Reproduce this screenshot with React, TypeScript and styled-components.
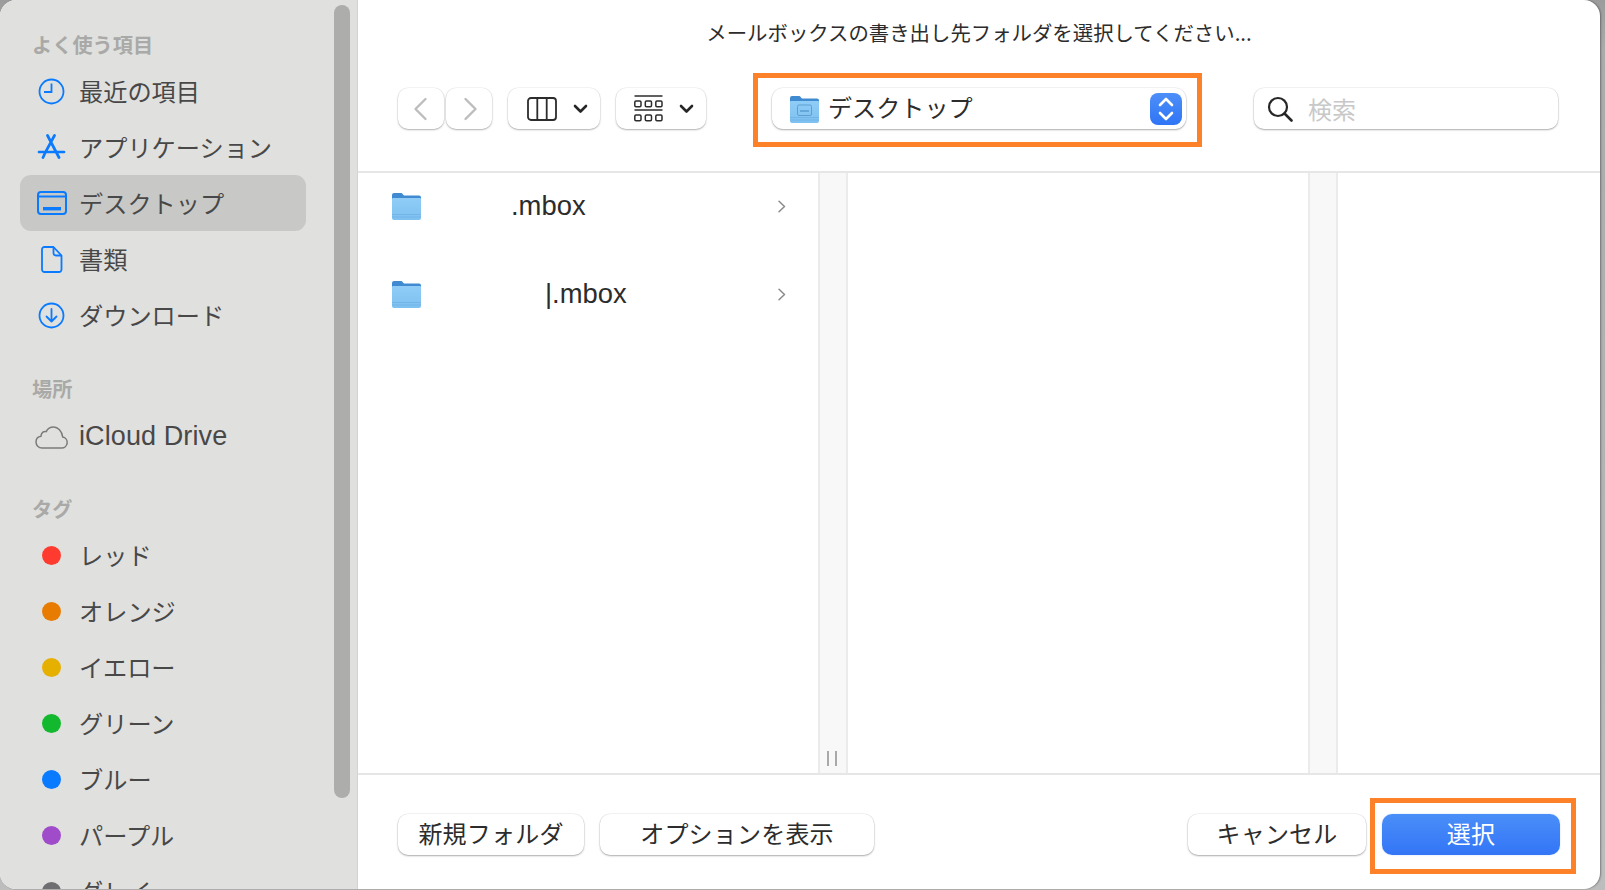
import React from "react";
import styled, { createGlobalStyle } from "styled-components";

const JP = `"Noto Sans CJK JP", "Liberation Sans", sans-serif`;

const Global = createGlobalStyle`
  html, body { margin: 0; padding: 0; width: 1605px; height: 890px; overflow: hidden; background: #a9a9a9; }
  #root { width: 1605px; height: 890px; overflow: hidden; }
  * { box-sizing: border-box; }
`;

const Backdrop = styled.div`
  width: 1605px; height: 890px; padding-right: 5px; padding-bottom: 1px;
  background: linear-gradient(180deg, #9c9c9c 0, #ababab 50px, #bdbdbd 100%);
`;
const Win = styled.div`
  width: 1600px; height: 889px; display: flex; overflow: hidden;
  border-radius: 16px; background: #fff; font-family: ${JP};
  box-shadow: 1px 0 2px rgba(0,0,0,.35);
`;
const Sidebar = styled.aside`
  width: 358px; flex: none; height: 100%; position: relative; overflow: hidden;
  background: #e0e0de; border-right: 1px solid #d3d3d2; padding: 30px 0 0 20px;
`;
const Thumb = styled.div`
  position: absolute; left: 334px; top: 5px; width: 16px; height: 793px;
  border-radius: 8px; background: #adadab;
`;
const Heading = styled.div<{ $gap: number; $after: number }>`
  height: 30px; line-height: 30px; margin-top: ${p => p.$gap}px; margin-bottom: ${p => p.$after}px;
  padding-left: 12px; font-size: 20.2px; font-weight: 700; color: #a9a9a7;
`;
const Row = styled.div<{ $on?: boolean }>`
  width: 286px; height: 56px; display: flex; align-items: center; padding: 0 0 2px 12.5px;
  border-radius: 11px; background: ${p => (p.$on ? "#c8c8c6" : "transparent")};
  color: #484848; font-size: 24.2px;
`;
const IconSlot = styled.span`
  width: 38px; height: 34px; flex: none; display: flex; align-items: center; justify-content: center;
  margin: 2px 8.5px 0 0;
`;
const Dot = styled.span<{ $c: string }>`
  width: 19px; height: 19px; border-radius: 50%; background: ${p => p.$c};
`;
const Latin = styled.span`
  font-family: "Liberation Sans", sans-serif; font-size: 27px; letter-spacing: 0.1px;
`;

const Main = styled.main`
  flex: 1; min-width: 0; height: 100%; display: flex; flex-direction: column;
`;
const Title = styled.div`
  height: 66px; flex: none; padding-top: 18px; text-align: center; line-height: 28px;
  font-size: 20.4px; color: #2c2c2c;
`;
const Toolbar = styled.div`
  height: 107px; flex: none; display: flex; align-items: flex-start; padding: 22px 0 0 40px;
  border-bottom: 2px solid #e6e6e6; position: relative;
`;
const TBtn = styled.div<{ $w: number; $ml: number; $inset?: number }>`
  width: ${p => p.$w}px; height: 41px; margin-left: ${p => p.$ml}px; flex: none;
  display: flex; align-items: center; justify-content: ${p => (p.$inset ? "flex-start" : "center")};
  gap: 16px; padding-left: ${p => p.$inset ?? 0}px;
  background: #fff; border-radius: 10px;
  box-shadow: 0 0 0 0.5px rgba(0,0,0,.07), 0 1px 2px rgba(0,0,0,.28);
`;
const Highlight = styled.div`
  position: absolute; left: 395px; top: 7px; width: 449px; height: 74px;
  border: 5px solid #fd8128; pointer-events: none;
`;
const Popup = styled.div`
  width: 414px; height: 41px; margin-left: 66px; flex: none; display: flex; align-items: center;
  padding: 0 4px 0 18px; background: #fff; border-radius: 11px;
  box-shadow: 0 0 0 0.5px rgba(0,0,0,.08), 0 1px 2px rgba(0,0,0,.3);
  font-size: 24.1px; color: #2c2c2c;
`;
const PopupLabel = styled.span`
  flex: 1; margin-left: 9px; line-height: 36px; margin-top: -4px;
`;
const Stepper = styled.span`
  width: 32px; height: 32px; border-radius: 8px; display: flex; align-items: center; justify-content: center;
  background: linear-gradient(180deg, #4d8ff8, #2f75f6);
`;
const Search = styled.div`
  width: 304px; height: 41px; margin-left: 68px; flex: none; display: flex; align-items: center;
  padding-left: 13px; gap: 15px; background: #fff; border-radius: 10px;
  box-shadow: 0 0 0 0.5px rgba(0,0,0,.08), 0 1px 2px rgba(0,0,0,.3);
  font-size: 24px; color: #c8c8c8;
`;

const Browser = styled.div`
  flex: 1; min-height: 0; display: flex; border-bottom: 2px solid #e6e6e6;
`;
const Column = styled.div<{ $w?: number }>`
  ${p => (p.$w ? `width: ${p.$w}px; flex: none;` : "flex: 1;")}
`;
const FileRow = styled.div`
  height: 88px; display: flex; align-items: flex-start; padding: 19px 0 0 34px;
`;
const FileName = styled.span<{ $pad: number }>`
  margin-left: ${p => p.$pad}px; flex: 1; line-height: 32px; margin-top: -2px;
  font-family: "Liberation Sans", sans-serif; font-size: 27.4px; color: #2c2c2c;
`;
const Chevron = styled.span`
  width: 10px; height: 13px; margin: 7.5px 31px 0 0; display: flex; flex: none;
`;
const Gutter = styled.div`
  width: 30px; flex: none; position: relative; background: #f8f8f8;
  border-left: 2px solid #ebebeb; border-right: 2px solid #ebebeb;
`;
const Grip = styled.span`
  position: absolute; left: 7px; bottom: 7px; width: 10px; height: 15px;
  border-left: 2px solid #a9a9a9; border-right: 2px solid #a9a9a9;
`;

const Footer = styled.div`
  height: 114px; flex: none; display: flex; align-items: flex-start; padding: 39px 0 0 40px; position: relative;
`;
const Btn = styled.div<{ $w: number; $ml?: number; $primary?: boolean; $auto?: boolean }>`
  width: ${p => p.$w}px; height: 41px; flex: none; margin-left: ${p => (p.$auto ? "auto" : `${p.$ml ?? 0}px`)};
  display: flex; align-items: center; justify-content: center; border-radius: 10px; padding-bottom: 4px;
  font-size: 24px; letter-spacing: 0.2px;
  color: ${p => (p.$primary ? "#fff" : "#2c2c2c")};
  background: ${p => (p.$primary ? "linear-gradient(180deg, #4a8ef8, #3375f6)" : "#fff")};
  box-shadow: ${p => (p.$primary ? "0 0 2px rgba(60,120,246,.25)" : "0 0 0 0.5px rgba(0,0,0,.08), 0 1px 2px rgba(0,0,0,.3)")};
`;
const FooterSpacer = styled.div`
  flex: 0 0 40px;
`;
const SelectBox = styled.div`
  position: absolute; left: 1012px; top: 23px; width: 206px; height: 76px;
  border: 5px solid #fd8128; pointer-events: none;
`;

const blue = "#0a7aff";
const Clock = () => (
  <svg width="27" height="27" viewBox="0 0 27 27" fill="none" stroke={blue} strokeWidth="1.8">
    <circle cx="13.5" cy="13.5" r="12" /><path d="M13.5 5.5v8.5H6" />
  </svg>
);
const AppIcon = () => (
  <svg width="29" height="26" viewBox="0 0 29 26" fill="none" stroke={blue} strokeWidth="2.7" strokeLinecap="round">
    <path d="M10.5 1.5l11.5 22M17.5 1.5L8.5 18l-2.5 5.5M2 18h25" />
  </svg>
);
const DesktopIcon = () => (
  <svg width="30" height="24" viewBox="0 0 30 24" fill="none" stroke={blue} strokeWidth="2">
    <rect x="1" y="1" width="28" height="22" rx="3" /><path d="M1 5.5h28" />
    <rect x="6" y="16" width="18" height="3.4" fill={blue} stroke="none" />
  </svg>
);
const DocIcon = () => (
  <svg width="22" height="27" viewBox="0 0 22 27" fill="none" stroke={blue} strokeWidth="1.8" strokeLinejoin="round">
    <path d="M3.5 1h9l8 8.5v14a2.5 2.5 0 0 1-2.5 2.5H3.5A2.5 2.5 0 0 1 1 23.5v-20A2.5 2.5 0 0 1 3.5 1z" />
    <path d="M12.5 1v6a2.5 2.5 0 0 0 2.5 2.5h5.5" />
  </svg>
);
const DownIcon = () => (
  <svg width="27" height="27" viewBox="0 0 27 27" fill="none" stroke={blue} strokeWidth="1.8" strokeLinecap="round" strokeLinejoin="round">
    <circle cx="13.5" cy="13.5" r="12" /><path d="M13.5 7v12.5M8.5 14.5l5 5 5-5" />
  </svg>
);
const CloudIcon = () => (
  <svg width="33" height="23" viewBox="0 0 33 23" fill="none" stroke="#7b7b7b" strokeWidth="1.5">
    <path d="M7 22h19.5a5.5 5.5 0 0 0 1.2-10.9C27 5 22.8 1 18.6 1c-3.4 0-6 1.8-7.4 4.6C8.6 4.8 6 7 6 10.2 3 10.6 1 13 1 16c0 3.4 2.6 6 6 6z" />
  </svg>
);
const Folder = ({ glyph }: { glyph?: boolean }) => (
  <svg width="29" height="28" viewBox="0 0 29 28">
    <defs>
      <linearGradient id="fb" x1="0" y1="0" x2="0" y2="1">
        <stop offset="0" stopColor="#8fcdf7" /><stop offset="1" stopColor="#7ec0f0" />
      </linearGradient>
    </defs>
    <path d="M0 3a2 2 0 0 1 2-2h6.5c1.2 0 1.8.5 2.5 1.4L12 3.6h15a2 2 0 0 1 2 2V10H0z" fill="#3f8ad0" />
    <path d="M0 7a1 1 0 0 1 1-1h27a1 1 0 0 1 1 1v19a2 2 0 0 1-2 2H2a2 2 0 0 1-2-2z" fill="url(#fb)" />
    <path d="M0 22.5h29M0 25h29" stroke="#6cb0e4" strokeWidth=".7" />
    {glyph && (
      <g fill="none" stroke="#5c9fd2" strokeWidth="1">
        <rect x="7.5" y="10" width="14" height="10.5" rx="1.5" /><path d="M10 16h9" strokeWidth="1.6" />
      </g>
    )}
  </svg>
);

const Back = ({ flip }: { flip?: boolean }) => (
  <svg width="17" height="24" viewBox="0 0 17 24" fill="none" stroke="#bdbdbd" strokeWidth="2.4" strokeLinecap="round" strokeLinejoin="round"
    transform={flip ? "scale(-1 1)" : undefined}>
    <path d="M12.5 2L2.5 12l10 10" />
  </svg>
);
const Caret = () => (
  <svg width="15" height="10" viewBox="0 0 15 10" fill="none" stroke="#262626" strokeWidth="2.6" strokeLinecap="round" strokeLinejoin="round">
    <path d="M2 2l5.5 5.5L13 2" />
  </svg>
);
const Columns = () => (
  <svg width="30" height="24" viewBox="0 0 30 24" fill="none" stroke="#2c2c2c" strokeWidth="1.8">
    <rect x="1" y="1" width="28" height="22" rx="3" /><path d="M10.3 1v22M19.7 1v22" />
  </svg>
);
const Gallery = () => (
  <svg width="29" height="28" viewBox="0 0 29 28" fill="none" stroke="#2c2c2c">
    <path d="M.5 1h28M.5 15h28" strokeWidth="1.6" />
    {[0, 10.5, 21].map(x => [6, 20].map(y => (
      <rect key={`${x}-${y}`} x={x + 0.8} y={y} width="6.2" height="5.8" rx="1.2" strokeWidth="1.5" />
    )))}
  </svg>
);
const StepArrows = () => (
  <svg width="18" height="26" viewBox="0 0 18 26" fill="none" stroke="#fff" strokeWidth="2.6" strokeLinecap="round" strokeLinejoin="round">
    <path d="M3 9l6-6 6 6M3 17l6 6 6-6" />
  </svg>
);
const Lens = () => (
  <svg width="26" height="26" viewBox="0 0 26 26" fill="none" stroke="#262626" strokeWidth="2.2" strokeLinecap="round">
    <circle cx="11" cy="11" r="9" /><path d="M17.5 17.5l7 7" strokeWidth="2.6" />
  </svg>
);
const Right = () => (
  <svg width="10" height="13" viewBox="0 0 10 13" fill="none" stroke="#8a8a8a" strokeWidth="1.5" strokeLinecap="round" strokeLinejoin="round">
    <path d="M2 1.2l5.5 5.3L2 11.8" />
  </svg>
);

const favourites: [React.ReactNode, string, boolean?][] = [
  [<Clock />, "最近の項目"],
  [<AppIcon />, "アプリケーション"],
  [<DesktopIcon />, "デスクトップ", true],
  [<DocIcon />, "書類"],
  [<DownIcon />, "ダウンロード"],
];
const tags: [string, string][] = [
  ["#ff3b30", "レッド"], ["#e87c00", "オレンジ"], ["#e6b000", "イエロー"], ["#12b92f", "グリーン"],
  ["#0a7aff", "ブルー"], ["#a04bc9", "パープル"], ["#6f6f72", "グレイ"],
];

export default function App() {
  return (
    <Backdrop>
      <Global />
      <Win>
        <Sidebar>
          <Thumb />
          <Heading $gap={0} $after={3}>よく使う項目</Heading>
          {favourites.map(([icon, label, on]) => (
            <Row key={label} $on={on}><IconSlot>{icon}</IconSlot>{label}</Row>
          ))}
          <Heading $gap={31} $after={5.5}>場所</Heading>
          <Row><IconSlot><CloudIcon /></IconSlot><Latin>iCloud Drive</Latin></Row>
          <Heading $gap={28} $after={3.5}>タグ</Heading>
          {tags.map(([c, label]) => (
            <Row key={label}><IconSlot><Dot $c={c} /></IconSlot>{label}</Row>
          ))}
        </Sidebar>
        <Main>
          <Title>メールボックスの書き出し先フォルダを選択してください...</Title>
          <Toolbar>
            <TBtn $w={46} $ml={0}><Back /></TBtn>
            <TBtn $w={46} $ml={2}><Back flip /></TBtn>
            <TBtn $w={92} $ml={16} $inset={19}><Columns /><Caret /></TBtn>
            <TBtn $w={90} $ml={16} $inset={18}><Gallery /><Caret /></TBtn>
            <Popup>
              <Folder glyph />
              <PopupLabel>デスクトップ</PopupLabel>
              <Stepper><StepArrows /></Stepper>
            </Popup>
            <Search><Lens />検索</Search>
            <Highlight />
          </Toolbar>
          <Browser>
            <Column $w={460}>
              <FileRow><Folder /><FileName $pad={90}>.mbox</FileName><Chevron><Right /></Chevron></FileRow>
              <FileRow><Folder /><FileName $pad={124}>|.mbox</FileName><Chevron><Right /></Chevron></FileRow>
            </Column>
            <Gutter><Grip /></Gutter>
            <Column $w={460} />
            <Gutter />
            <Column />
          </Browser>
          <Footer>
            <Btn $w={186}>新規フォルダ</Btn>
            <Btn $w={274} $ml={16}>オプションを表示</Btn>
            <Btn $w={178} $auto>キャンセル</Btn>
            <Btn $w={178} $ml={16} $primary>選択</Btn>
            <FooterSpacer />
            <SelectBox />
          </Footer>
        </Main>
      </Win>
    </Backdrop>
  );
}
